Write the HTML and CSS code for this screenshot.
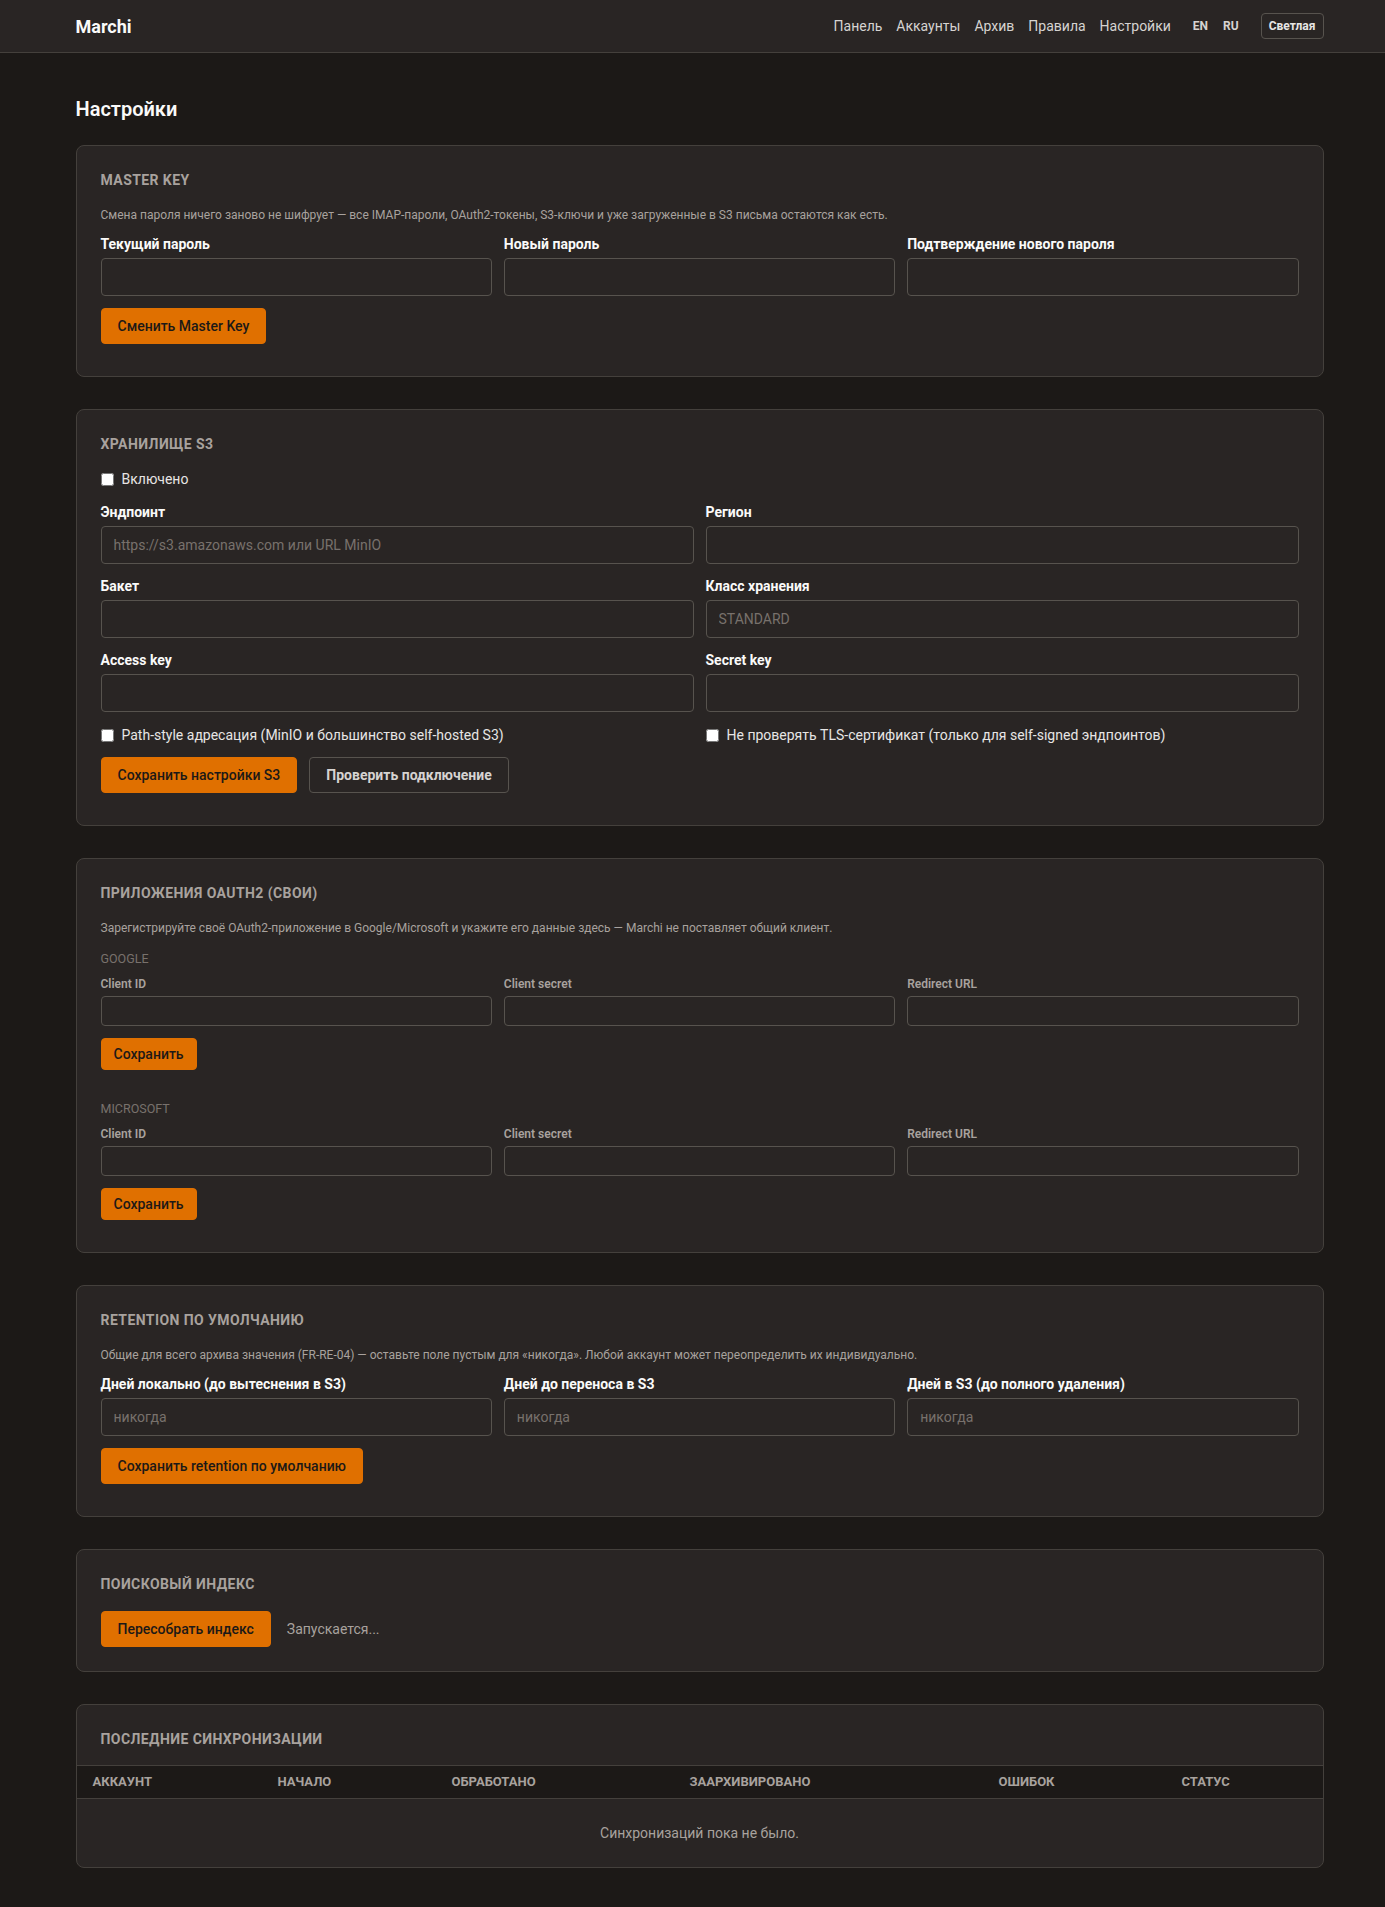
FILE: index.html
```html
<!DOCTYPE html>
<html lang="ru">
<head>
<meta charset="utf-8">
<title>Marchi — Настройки</title>
<link rel="stylesheet" href="styles.css">
</head>
<body>
<header class="topbar">
  <div class="topbar-inner">
    <div class="brand">Marchi</div>
    <nav class="nav">
      <a class="nav-link">Панель</a>
      <a class="nav-link">Аккаунты</a>
      <a class="nav-link">Архив</a>
      <a class="nav-link">Правила</a>
      <a class="nav-link">Настройки</a>
      <div class="lang">
        <a class="lang-link">EN</a>
        <a class="lang-link">RU</a>
      </div>
      <button class="theme-btn">Светлая</button>
    </nav>
  </div>
</header>

<main class="page">
  <h1 class="page-title">Настройки</h1>

  <section class="card">
    <h2 class="card-title">Master Key</h2>
    <p class="card-desc">Смена пароля ничего заново не шифрует — все IMAP-пароли, OAuth2-токены, S3-ключи и уже загруженные в S3 письма остаются как есть.</p>
    <div class="grid3">
      <div class="field"><label class="label">Текущий пароль</label><input class="input" type="password"></div>
      <div class="field"><label class="label">Новый пароль</label><input class="input" type="password"></div>
      <div class="field"><label class="label">Подтверждение нового пароля</label><input class="input" type="password"></div>
    </div>
    <div class="actions">
      <button class="btn btn-primary">Сменить Master Key</button>
    </div>
  </section>

  <section class="card">
    <h2 class="card-title">Хранилище S3</h2>
    <label class="check"><input type="checkbox"><span>Включено</span></label>
    <div class="grid2">
      <div class="field"><label class="label">Эндпоинт</label><input class="input" placeholder="https://s3.amazonaws.com или URL MinIO"></div>
      <div class="field"><label class="label">Регион</label><input class="input"></div>
      <div class="field"><label class="label">Бакет</label><input class="input"></div>
      <div class="field"><label class="label">Класс хранения</label><input class="input" placeholder="STANDARD"></div>
      <div class="field"><label class="label">Access key</label><input class="input"></div>
      <div class="field"><label class="label">Secret key</label><input class="input" type="password"></div>
      <label class="check check-grid"><input type="checkbox"><span>Path-style адресация (MinIO и большинство self-hosted S3)</span></label>
      <label class="check check-grid"><input type="checkbox"><span>Не проверять TLS-сертификат (только для self-signed эндпоинтов)</span></label>
    </div>
    <div class="actions">
      <button class="btn btn-primary">Сохранить настройки S3</button>
      <button class="btn btn-secondary">Проверить подключение</button>
    </div>
  </section>

  <section class="card">
    <h2 class="card-title">Приложения OAuth2 (свои)</h2>
    <p class="card-desc">Зарегистрируйте своё OAuth2-приложение в Google/Microsoft и укажите его данные здесь — Marchi не поставляет общий клиент.</p>
    <div class="provider">
      <h3 class="provider-title">Google</h3>
      <div class="grid3 grid3-sm">
        <div class="field"><label class="label label-sm">Client ID</label><input class="input input-sm"></div>
        <div class="field"><label class="label label-sm">Client secret</label><input class="input input-sm" type="password"></div>
        <div class="field"><label class="label label-sm">Redirect URL</label><input class="input input-sm"></div>
      </div>
      <div class="actions actions-sm">
        <button class="btn btn-primary btn-sm">Сохранить</button>
      </div>
    </div>
    <div class="provider provider-next">
      <h3 class="provider-title">Microsoft</h3>
      <div class="grid3 grid3-sm">
        <div class="field"><label class="label label-sm">Client ID</label><input class="input input-sm"></div>
        <div class="field"><label class="label label-sm">Client secret</label><input class="input input-sm" type="password"></div>
        <div class="field"><label class="label label-sm">Redirect URL</label><input class="input input-sm"></div>
      </div>
      <div class="actions actions-sm">
        <button class="btn btn-primary btn-sm">Сохранить</button>
      </div>
    </div>
  </section>

  <section class="card">
    <h2 class="card-title">Retention по умолчанию</h2>
    <p class="card-desc">Общие для всего архива значения (FR-RE-04) — оставьте поле пустым для «никогда». Любой аккаунт может переопределить их индивидуально.</p>
    <div class="grid3">
      <div class="field"><label class="label">Дней локально (до вытеснения в S3)</label><input class="input" placeholder="никогда"></div>
      <div class="field"><label class="label">Дней до переноса в S3</label><input class="input" placeholder="никогда"></div>
      <div class="field"><label class="label">Дней в S3 (до полного удаления)</label><input class="input" placeholder="никогда"></div>
    </div>
    <div class="actions">
      <button class="btn btn-primary">Сохранить retention по умолчанию</button>
    </div>
  </section>

  <section class="card card-compact">
    <h2 class="card-title">Поисковый индекс</h2>
    <div class="inline-row">
      <button class="btn btn-primary">Пересобрать индекс</button>
      <span class="status-text">Запускается...</span>
    </div>
  </section>

  <section class="card card-table">
    <h2 class="card-title">Последние синхронизации</h2>
    <table class="table">
      <thead>
        <tr>
          <th class="col-acc">Аккаунт</th>
          <th class="col-start">Начало</th>
          <th class="col-proc">Обработано</th>
          <th class="col-arch">Заархивировано</th>
          <th class="col-err">Ошибок</th>
          <th class="col-status">Статус</th>
        </tr>
      </thead>
      <tbody>
        <tr><td class="empty" colspan="6">Синхронизаций пока не было.</td></tr>
      </tbody>
    </table>
  </section>
</main>
</body>
</html>
```

FILE: styles.css
```css
* { box-sizing: border-box; }

html, body {
  margin: 0;
  padding: 0;
  background: #1c1917;
  color: #e7e5e4;
  font-family: Roboto, "Liberation Sans", sans-serif;
  font-size: 14px;
}

.topbar {
  background: #292524;
  border-bottom: 1px solid #44403c;
  height: 53px;
}
.topbar-inner {
  width: 1248px;
  margin-left: calc(50% - 617px);
  height: 52px;
  display: flex;
  align-items: center;
  justify-content: space-between;
}
.brand {
  font-size: 18px;
  font-weight: 700;
  color: #fafaf9;
}
.nav {
  display: flex;
  align-items: center;
  gap: 14px;
}
.nav-link {
  font-size: 14px;
  color: #d6d3d1;
  cursor: pointer;
}
.lang {
  display: flex;
  gap: 15px;
  margin-left: 8px;
  margin-right: 8px;
}
.lang-link {
  font-size: 12px;
  font-weight: 700;
  color: #d6d3d1;
}
.theme-btn {
  font-family: inherit;
  font-size: 12px;
  font-weight: 700;
  color: #e7e5e4;
  background: transparent;
  border: 1px solid #57534e;
  border-radius: 4px;
  height: 26px;
  padding: 0 7px;
}

.page {
  width: 1248px;
  margin-left: calc(50% - 617px);
  padding: 42px 0 42px;
}
.page-title {
  margin: 0 0 22px;
  font-size: 20px;
  line-height: 28px;
  font-weight: 600;
  color: #fafaf9;
}

.card {
  background: #292524;
  border: 1px solid #44403c;
  border-radius: 8px;
  padding: 24px 24px 32px;
  margin-bottom: 32px;
}
.card-compact { padding-bottom: 24px; }
.card-table {
  padding: 24px 0 0;
  overflow: hidden;
  margin-bottom: 0;
}
.card-table .card-title { padding: 0 24px; }

.card-title {
  margin: 0 0 15px;
  font-size: 14px;
  line-height: 20px;
  font-weight: 700;
  text-transform: uppercase;
  letter-spacing: 0.03em;
  color: #a8a29e;
}
.card-desc {
  margin: 0 0 9px;
  font-size: 12px;
  line-height: 20px;
  color: #a8a29e;
}

.grid3 {
  display: grid;
  grid-template-columns: repeat(3, 1fr);
  gap: 12px;
}
.grid2 {
  display: grid;
  grid-template-columns: 1fr 1fr;
  column-gap: 12px;
  row-gap: 12px;
}
.field { display: flex; flex-direction: column; }
.label {
  font-size: 14px;
  line-height: 20px;
  font-weight: 700;
  color: #fafaf9;
  margin-bottom: 4px;
}
.label-sm {
  font-size: 12px;
  line-height: 16px;
  font-weight: 600;
  color: #a8a29e;
  margin-bottom: 4px;
}
.input {
  height: 38px;
  background: #292524;
  border: 1px solid #57534e;
  border-radius: 4px;
  padding: 0 12px;
  font-family: inherit;
  font-size: 14px;
  color: #e7e5e4;
  outline: none;
}
.input::placeholder { color: #78716c; }
.input-sm { height: 30px; }

.check {
  display: flex;
  align-items: center;
  gap: 8px;
  font-size: 14px;
  line-height: 20px;
  color: #e7e5e4;
  margin-bottom: 13px;
}
.check input {
  margin: 0;
  width: 13px;
  height: 13px;
}
.check-grid { margin: 1px 0 0; }

.actions {
  display: flex;
  gap: 12px;
  margin-top: 12px;
}
.actions-sm { margin-top: 12px; }

.btn {
  font-family: inherit;
  font-size: 14px;
  height: 36px;
  padding: 0 16px;
  border-radius: 4px;
  cursor: pointer;
}
.btn-primary {
  background: #e07000;
  border: 1px solid #e07000;
  color: #1c1917;
  font-weight: 500;
}
.btn-secondary {
  background: transparent;
  border: 1px solid #57534e;
  color: #d6d3d1;
  font-weight: 700;
}
.btn-sm {
  height: 32px;
  padding: 0 12px;
}

.provider-title {
  margin: 13px 0 9px;
  font-size: 12.5px;
  line-height: 16px;
  font-weight: 400;
  text-transform: uppercase;
  color: #78716c;
}
.provider-next .provider-title { margin-top: 31px; }

.inline-row {
  display: flex;
  align-items: center;
  gap: 16px;
  margin-top: 17px;
}
.status-text {
  font-size: 14px;
  color: #a8a29e;
}

.table {
  width: 100%;
  border-collapse: collapse;
  margin-top: 16px;
}
.table th {
  background: #1c1917;
  border-top: 1px solid #44403c;
  border-bottom: 1px solid #44403c;
  text-align: left;
  font-size: 13px;
  line-height: 16px;
  font-weight: 700;
  text-transform: uppercase;
  color: #a8a29e;
  padding: 8px 16px;
}
.col-acc { width: 185px; }
.col-start { width: 174px; }
.col-proc { width: 238px; }
.col-arch { width: 309px; }
.col-err { width: 183px; }
.col-status { width: auto; }
.table td.empty {
  text-align: center;
  padding: 24px 16px;
  font-size: 14px;
  line-height: 20px;
  color: #a8a29e;
}
```
